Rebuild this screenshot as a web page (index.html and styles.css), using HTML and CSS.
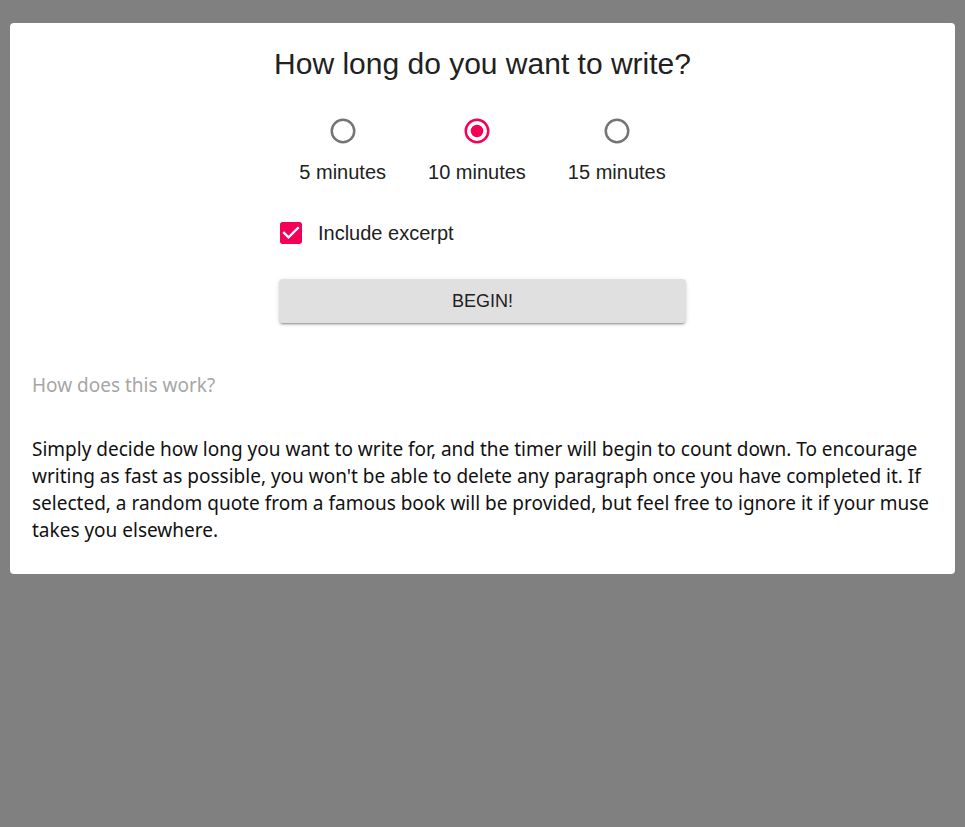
FILE: index.html
```html
<!DOCTYPE html>
<html lang="en">
<head>
<meta charset="utf-8">
<title>Write</title>
<link rel="stylesheet" href="styles.css">
</head>
<body>
<main class="card">
  <h1 class="title">How long do you want to write?</h1>
  <div class="radios">
    <label class="radio">
      <svg class="radio-icon" viewBox="0 0 24 24"><circle cx="12" cy="12" r="9" class="ring off"/></svg>
      <span class="radio-label">5 minutes</span>
    </label>
    <label class="radio">
      <svg class="radio-icon" viewBox="0 0 24 24"><circle cx="12" cy="12" r="9" class="ring on"/><circle cx="12" cy="12" r="5" class="dot"/></svg>
      <span class="radio-label">10 minutes</span>
    </label>
    <label class="radio">
      <svg class="radio-icon" viewBox="0 0 24 24"><circle cx="12" cy="12" r="9" class="ring off"/></svg>
      <span class="radio-label">15 minutes</span>
    </label>
  </div>
  <div class="controls">
    <label class="check">
      <svg class="check-icon" viewBox="3 3 18 18"><path d="M19 3H5c-1.11 0-2 .9-2 2v14c0 1.1.89 2 2 2h14c1.11 0 2-.9 2-2V5c0-1.1-.89-2-2-2zm-9 14l-5-5 1.410-1.41L10 14.17l7.59-7.59L19 8l-9 9z"/></svg>
      <span class="check-label">Include excerpt</span>
    </label>
    <button class="begin">BEGIN!</button>
  </div>
  <h2 class="how">How does this work?</h2>
  <p class="desc">Simply decide how long you want to write for, and the timer will begin to count down. To encourage writing as fast as possible, you won't be able to delete any paragraph once you have completed it. If selected, a random quote from a famous book will be provided, but feel free to ignore it if your muse takes you elsewhere.</p>
</main>
</body>
</html>
```

FILE: styles.css
```css
html, body {
  margin: 0;
  padding: 0;
}
body {
  background: #808080;
  min-height: 827px;
  padding: 23px 10px 0;
  box-sizing: border-box;
}
.card {
  background: #fff;
  border-radius: 4px;
  padding: 24px 22px 30px;
  display: flex;
  flex-direction: column;
}
.title {
  margin: 0;
  text-align: center;
  font-family: "Liberation Sans", Arial, sans-serif;
  font-weight: 400;
  font-size: 30px;
  line-height: 34px;
  color: #212121;
}
.radios {
  display: flex;
  justify-content: center;
  gap: 42px;
  margin-top: 35px;
}
.radio {
  display: flex;
  flex-direction: column;
  align-items: center;
}
.radio-icon {
  width: 30px;
  height: 30px;
  display: block;
}
.ring {
  fill: none;
  stroke-width: 2;
}
.ring.off { stroke: #757575; }
.ring.on { stroke: #f50057; }
.dot { fill: #f50057; }
.radio-label {
  margin-top: 14px;
  font-family: "Liberation Sans", Arial, sans-serif;
  font-size: 20px;
  line-height: 24px;
  color: #212121;
}
.controls {
  width: 407px;
  align-self: center;
  display: flex;
  flex-direction: column;
  margin-top: 37px;
}
.check {
  display: flex;
  align-items: center;
  gap: 16px;
  padding-left: 1px;
  height: 24px;
}
.check-icon {
  width: 22px;
  height: 22px;
  fill: #f50057;
  display: block;
}
.check-label {
  font-family: "Liberation Sans", Arial, sans-serif;
  font-size: 20px;
  line-height: 24px;
  color: #212121;
}
.begin {
  margin-top: 34px;
  height: 44px;
  border: none;
  border-radius: 4px;
  background: #e0e0e0;
  color: #212121;
  font-family: "Liberation Sans", Arial, sans-serif;
  font-size: 18px;
  box-shadow: 0 3px 1px -2px rgba(0,0,0,.2), 0 2px 2px 0 rgba(0,0,0,.14), 0 1px 5px 0 rgba(0,0,0,.12);
  padding: 0;
}
.how {
  margin: 49px 0 0;
  font-family: "Noto Sans", sans-serif;
  font-weight: 400;
  font-size: 19px;
  line-height: 27px;
  color: #a6a6a6;
}
.desc {
  margin: 37px 0 0;
  font-family: "Noto Sans", sans-serif;
  font-size: 19px;
  line-height: 27px;
  color: #111;
}
```
